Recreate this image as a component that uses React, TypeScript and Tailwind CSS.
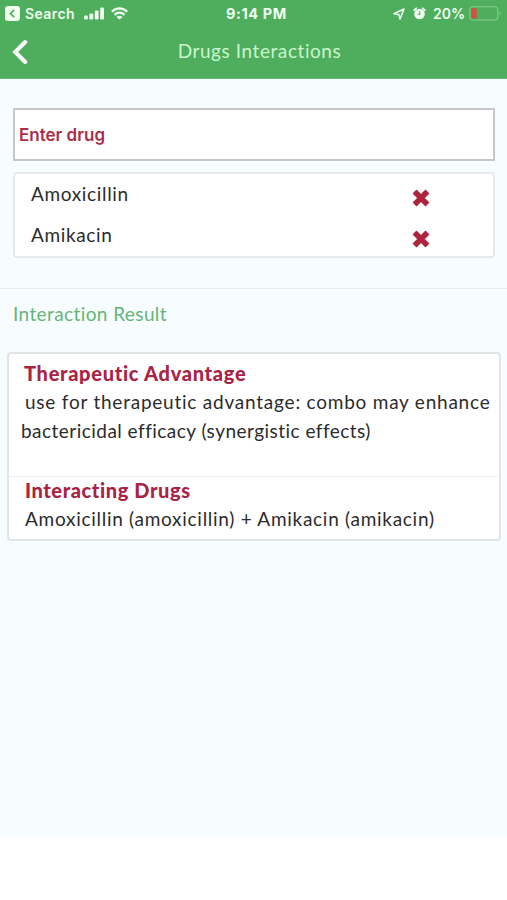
import React, { useState } from 'react';

const INITIAL_DRUGS = ['Amoxicillin', 'Amikacin'];

const SignalIcon = () => (
  <svg className="ml-[9px] h-[13px] w-5" viewBox="0 0 20 13" fill="#effff0">
    <rect x="0" y="8.5" width="3.8" height="4" rx="1.2" />
    <rect x="5.4" y="6.5" width="3.8" height="6" rx="1.2" />
    <rect x="10.8" y="3.5" width="3.8" height="9" rx="1.2" />
    <rect x="16.2" y="0.5" width="3.8" height="12" rx="1.2" />
  </svg>
);

const WifiIcon = () => (
  <svg className="ml-[7px] h-[13px] w-[17px]" viewBox="0 0 17 13" fill="none" stroke="#effff0" strokeWidth="2.3">
    <path d="M0.9 4.8C5.2 0.3 11.8 0.3 16.1 4.8" />
    <path d="M3.5 7.9C6.5 5 10.5 5 13.5 7.9" />
    <path d="M8.5 12.6L5.4 9.9C7.3 8.3 9.7 8.3 11.6 9.9Z" fill="#effff0" stroke="none" />
  </svg>
);

const LocationIcon = () => (
  <svg className="h-3 w-3" viewBox="0 0 12 12" fill="none" stroke="#effff0" strokeWidth="1.5" strokeLinejoin="round">
    <path d="M11 1L1 5.8L5.8 6.4L7 11Z" />
  </svg>
);

const AlarmIcon = () => (
  <svg className="ml-2 h-[13px] w-[13px]" viewBox="0 0 13 13" fill="none">
    <path d="M1.2 3.2L3.2 1.3M11.8 3.2L9.8 1.3" stroke="#effff0" strokeWidth="1.8" strokeLinecap="round" />
    <circle cx="6.5" cy="7" r="5.3" fill="#effff0" />
    <path d="M6.8 4.3V7.2H4.5" stroke="#4fae5d" strokeWidth="1.1" />
  </svg>
);

const BatteryIcon = () => (
  <svg className="ml-1 h-[15px] w-8" viewBox="0 0 32 15" fill="none">
    <rect x="0.8" y="0.8" width="28" height="13.2" rx="3.2" stroke="#84cc8d" strokeWidth="1.1" />
    <rect x="2.2" y="2.3" width="5.4" height="10.2" rx="1.2" fill="#db4b3e" />
    <path d="M30.4 5.2C31.8 6 31.8 8.8 30.4 9.6Z" fill="#84cc8d" />
  </svg>
);

const RemoveIcon = () => (
  <svg className="h-[18px] w-[18px]" viewBox="0 0 18 18" fill="#ad263d" stroke="#ad263d" strokeWidth="1.6" strokeLinejoin="round">
    <path d="M4.5 1.6L9 6.1L13.5 1.6L16.4 4.5L11.9 9L16.4 13.5L13.5 16.4L9 11.9L4.5 16.4L1.6 13.5L6.1 9L1.6 4.5Z" />
  </svg>
);

const StatusBar = () => (
  <div className="grid h-[27px] grid-cols-3 items-center pl-[5px] pr-1.5 font-['Inter',sans-serif] text-[#effff0]">
    <div className="flex items-center">
      <svg className="h-[15px] w-[15px]" viewBox="0 0 15 15">
        <rect width="15" height="15" rx="3.2" fill="#effff0" />
        <path d="M9.2 3.8L5.4 7.5L9.2 11.2" fill="none" stroke="#4fae5d" strokeWidth="1.7" />
      </svg>
      <span className="ml-[5px] text-[14px] font-semibold tracking-[0.4px]">Search</span>
      <SignalIcon />
      <WifiIcon />
    </div>
    <div className="pl-[7px] text-center text-[14.5px] font-bold tracking-[0.6px]">9:14 PM</div>
    <div className="flex items-center justify-end">
      <LocationIcon />
      <AlarmIcon />
      <span className="ml-[7px] text-[14px] font-semibold">20%</span>
      <BatteryIcon />
    </div>
  </div>
);

const App: React.FC = () => {
  const [drugs, setDrugs] = useState<string[]>(INITIAL_DRUGS);
  const [query, setQuery] = useState('');

  const handleRemove = (name: string) => {
    setDrugs(prev => prev.filter(d => d !== name));
  };

  return (
    <div className="h-[900px] w-[507px] overflow-hidden bg-white font-['Lato',sans-serif] text-[#2c2c2c]">
      <div className="flex h-[837px] flex-col bg-[#f7fcff]">
        {/* Header */}
        <header className="h-[79px] shrink-0 border-b border-[#68b977] bg-[#4fae5d]">
          <StatusBar />
          <div className="grid h-[50px] grid-cols-[60px_1fr_60px] items-center">
            <button className="pl-3" aria-label="Back">
              <svg className="h-[26px] w-4" viewBox="0 0 16 26" fill="none" stroke="#fff" strokeWidth="4" strokeLinecap="round">
                <path d="M13.2 3L3.2 13L13.2 23" />
              </svg>
            </button>
            <h1 className="whitespace-nowrap pb-0.5 pl-3 text-center text-[19px] tracking-[0.57px] text-[#c9f5cd]">Drugs Interactions</h1>
          </div>
        </header>

        {/* Drug entry */}
        <section className="h-[210px] shrink-0 border-b border-[#e9eef1] px-[13px] pt-[29px]">
          <input
            className="block h-[53px] w-[482px] border-2 border-[#c4c8ca] bg-white px-1 font-['Inter',sans-serif] text-[17px] font-semibold text-[#ac2d49] outline-none placeholder:text-[#ac2d49] placeholder:opacity-100"
            placeholder="Enter drug"
            value={query}
            onChange={e => setQuery(e.target.value)}
          />
          <ul className="mt-[11px] h-[86px] w-[482px] rounded-sm border-2 border-[#e6eaed] bg-white">
            {drugs.map(drug => (
              <li key={drug} className="flex h-[41.5px] items-center justify-between pl-4 pr-[63px]">
                <span className="pb-0.5 text-[19px] tracking-[0.65px]">{drug}</span>
                <button className="mt-1.5" aria-label={`Remove ${drug}`} onClick={() => handleRemove(drug)}>
                  <RemoveIcon />
                </button>
              </li>
            ))}
          </ul>
        </section>

        {/* Result */}
        <section className="px-[7px]">
          <h2 className="h-[63px] pl-1.5 pt-3 text-[19px] leading-[26px] tracking-[0.4px] text-[#65b577]">Interaction Result</h2>
          <div className="h-[189px] w-[494px] rounded-sm border-2 border-[#e0e5e8] bg-white">
            <div className="h-[123px] border-b border-[#eceff1] pt-[5px]">
              <h3 className="pl-[15px] text-[20px] font-black leading-[28px] tracking-[0.7px] text-[#a92444]">Therapeutic Advantage</h3>
              <p className="whitespace-nowrap text-[19px] leading-[29px]">
                <span className="block pl-4 tracking-[0.77px]">use for therapeutic advantage: combo may enhance</span>
                <span className="block pl-3 tracking-[0.47px]">bactericidal efficacy (synergistic effects)</span>
              </p>
            </div>
            <h3 className="pl-4 text-[20px] font-black leading-[26px] tracking-[0.6px] text-[#a92444]">Interacting Drugs</h3>
            <p className="whitespace-nowrap pl-4 text-[19px] leading-[32px] tracking-[0.72px]">
              Amoxicillin (amoxicillin) + Amikacin (amikacin)
            </p>
          </div>
        </section>
      </div>
    </div>
  );
};

export default App;
